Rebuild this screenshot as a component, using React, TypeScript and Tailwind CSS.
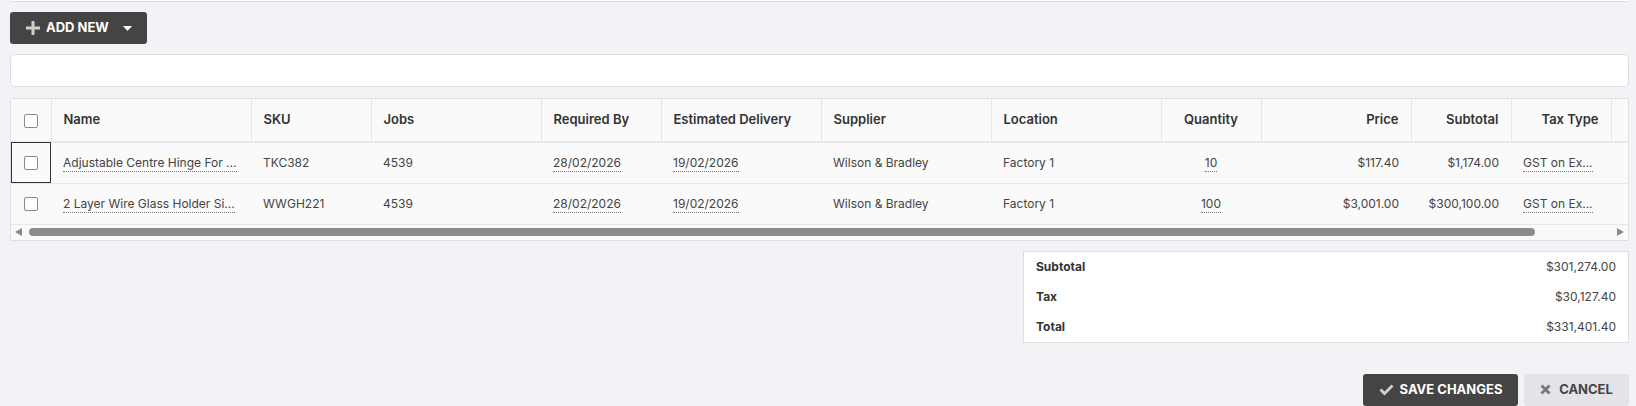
import React from "react";

const cols = [40, 200, 120, 170, 120, 160, 170, 170, 100, 150, 100, 100, 17];

type Row = {
  name: string;
  sku: string;
  jobs: string;
  req: string;
  est: string;
  supplier: string;
  location: string;
  qty: string;
  price: string;
  subtotal: string;
  tax: string;
};

const rows: Row[] = [
  {
    name: "Adjustable Centre Hinge For ...",
    sku: "TKC382",
    jobs: "4539",
    req: "28/02/2026",
    est: "19/02/2026",
    supplier: "Wilson & Bradley",
    location: "Factory 1",
    qty: "10",
    price: "$117.40",
    subtotal: "$1,174.00",
    tax: "GST on Ex...",
  },
  {
    name: "2 Layer Wire Glass Holder Si...",
    sku: "WWGH221",
    jobs: "4539",
    req: "28/02/2026",
    est: "19/02/2026",
    supplier: "Wilson & Bradley",
    location: "Factory 1",
    qty: "100",
    price: "$3,001.00",
    subtotal: "$300,100.00",
    tax: "GST on Ex...",
  },
];

function Box() {
  return <span className="inline-block w-[14px] h-[14px] rounded-[2px] border-[1.5px] border-[#8a8a8a] bg-white align-middle" />;
}

function Dotted({ children }: { children: React.ReactNode }) {
  return <span className="border-b border-dotted border-[#777] pb-[1px]">{children}</span>;
}

export default function App() {
  const th = "h-[43px] px-3 text-[13px] font-semibold text-[#333] border-r border-[#e6e6e6] whitespace-nowrap";
  const td = "h-[41px] px-3 text-[12px] text-[#444] whitespace-nowrap overflow-hidden";
  return (
    <div className="min-h-[406px] w-full bg-[#f2f3f7] pl-[10px] pr-[7px] pb-4" style={{ fontFamily: "Inter, 'Noto Sans', sans-serif" }}>
      <div className="h-[2px] bg-white border-b border-[#dcdcdc] rounded-b-[4px]" />
      <div className="pt-[10px]">
        <button className="h-[32px] w-[137px] bg-[#444444] rounded-[3px] flex items-center pl-[16px] gap-[6px] text-white text-[13px] font-bold">
          <svg width="14" height="14" viewBox="0 0 14 14"><path d="M5.5 0h3v5.5H14v3H8.5V14h-3V8.5H0v-3h5.5z" fill="#cfcfcf" /></svg>
          <span>ADD NEW</span>
          <svg width="9" height="5" viewBox="0 0 9 5" className="ml-[8px]"><path d="M0 0h9L4.5 5z" fill="#fff" /></svg>
        </button>
      </div>
      <div className="mt-[10px] h-[33px] bg-white border border-[#dedede] rounded-[5px]" />
      <div className="mt-[11px] border border-[#e0e0e0] bg-[#fafafa] overflow-hidden">
        <table className="table-fixed border-collapse" style={{ width: 1617 }}>
          <colgroup>
            {cols.map((w, i) => (
              <col key={i} style={{ width: w }} />
            ))}
          </colgroup>
          <thead>
            <tr className="border-b-2 border-[#e8e8e8]">
              <th className={th + " px-0 text-center"}><Box /></th>
              <th className={th + " text-left"}>Name</th>
              <th className={th + " text-left"}>SKU</th>
              <th className={th + " text-left"}>Jobs</th>
              <th className={th + " text-left"}>Required By</th>
              <th className={th + " text-left"}>Estimated Delivery</th>
              <th className={th + " text-left"}>Supplier</th>
              <th className={th + " text-left"}>Location</th>
              <th className={th + " text-center"}>Quantity</th>
              <th className={th + " text-right"}>Price</th>
              <th className={th + " text-right"}>Subtotal</th>
              <th className={th + " text-right"}>Tax Type</th>
              <th className="h-[43px]" />
            </tr>
          </thead>
          <tbody>
            {rows.map((r, i) => (
              <tr key={i} className="border-b border-[#e8e8e8]">
                <td className={td + " px-0 text-center" + (i === 0 ? " outline outline-1 outline-[#333] -outline-offset-1" : "")}><Box /></td>
                <td className={td}><Dotted>{r.name}</Dotted></td>
                <td className={td}>{r.sku}</td>
                <td className={td}>{r.jobs}</td>
                <td className={td}><Dotted>{r.req}</Dotted></td>
                <td className={td}><Dotted>{r.est}</Dotted></td>
                <td className={td}>{r.supplier}</td>
                <td className={td}>{r.location}</td>
                <td className={td + " text-center"}><Dotted>{r.qty}</Dotted></td>
                <td className={td + " text-right"}>{r.price}</td>
                <td className={td + " text-right"}>{r.subtotal}</td>
                <td className={td}><Dotted>{r.tax}</Dotted></td>
                <td className={td} />
              </tr>
            ))}
          </tbody>
        </table>
        <div className="h-[15px] flex items-center pl-[4px] pr-[4px]">
          <svg width="7" height="8" viewBox="0 0 7 8"><path d="M7 0v8L0 4z" fill="#8a8a8a" /></svg>
          <div className="flex-1 flex pl-[7px]">
            <div className="h-[8px] w-[1506px] rounded-full bg-[#8c8c8c]" />
          </div>
          <svg width="7" height="8" viewBox="0 0 7 8"><path d="M0 0v8l7-4z" fill="#8a8a8a" /></svg>
        </div>
      </div>
      <div className="flex justify-end mt-[10px]">
        <div className="w-[606px] bg-white border border-[#dedede] px-[12px] text-[12px]">
          <div className="h-[30px] flex items-center justify-between"><span className="font-bold text-[#333]">Subtotal</span><span className="text-[#444]">$301,274.00</span></div>
          <div className="h-[30px] flex items-center justify-between"><span className="font-bold text-[#333]">Tax</span><span className="text-[#444]">$30,127.40</span></div>
          <div className="h-[30px] flex items-center justify-between"><span className="font-bold text-[#333]">Total</span><span className="text-[#444]">$331,401.40</span></div>
        </div>
      </div>
      <div className="flex justify-end gap-[6px] mt-[31px]">
        <button className="h-[32px] w-[155px] bg-[#444444] rounded-[3px] flex items-center justify-center gap-[6px] text-white text-[13px] font-bold">
          <svg width="15" height="12" viewBox="0 0 15 12"><path d="M0.5 6.5l2-2 3 3L12.5 0.5l2 2-9 9z" fill="#cfcfcf" /></svg>
          SAVE CHANGES
        </button>
        <button className="h-[32px] w-[105px] bg-[#e3e4e8] rounded-[3px] flex items-center justify-center gap-[8px] text-[#444] text-[13px] font-bold">
          <svg width="11" height="11" viewBox="0 0 11 11"><path d="M1.5 1.5l8 8M9.5 1.5l-8 8" stroke="#777" strokeWidth="2.8" /></svg>
          CANCEL
        </button>
      </div>
    </div>
  );
}
